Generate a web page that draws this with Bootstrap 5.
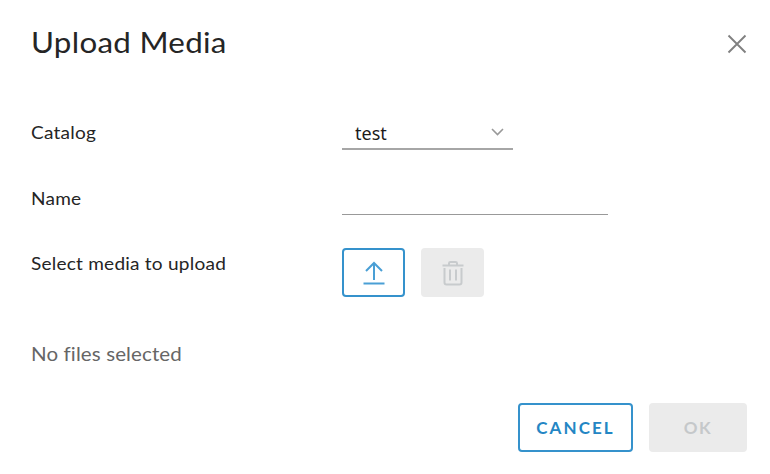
<!DOCTYPE html>
<html lang="en">
<head>
<meta charset="utf-8">
<meta name="viewport" content="width=device-width, initial-scale=1">
<title>Upload Media</title>
<link href="https://cdn.jsdelivr.net/npm/bootstrap@5.3.0/dist/css/bootstrap.min.css" rel="stylesheet">
<style>
body{font-family:Lato,"Liberation Sans",sans-serif;color:#252525;background:#fff;overflow:hidden}
.dialog{width:770px;height:474px;padding:22px 23px 0 31px}
.dialog-title{font-size:29px;line-height:40px;letter-spacing:.27px;font-weight:400;transform:scaleX(1.08);transform-origin:left}
.close-x{width:20px;height:20px;margin-top:3px}
.form-line{height:65.5px}
.label-col{width:311px;font-size:17px;line-height:24px;padding-top:10px}
.wide-text{display:inline-block;transform:scaleX(1.12);transform-origin:left;letter-spacing:.2px}
.catalog-select{width:171px;height:35px;padding:2px 8px 0 13px;border:0;border-bottom:2px solid #a6a6a6;border-radius:0;background:none;font-family:"Noto Sans",sans-serif;font-size:18px;line-height:24px;color:#1b1b1b}
.name-input{width:266px;height:34.5px;border:0;border-bottom:1px solid #999;border-radius:0;padding:0;background:none}
.line-btn{height:49px;border-radius:4px;border-width:2px;--bs-btn-color:#2486c4;--bs-btn-border-color:#3592cc;--bs-btn-disabled-color:#c5c8ca;--bs-btn-disabled-bg:#ebebeb;--bs-btn-disabled-border-color:#ebebeb;--bs-btn-disabled-opacity:1;font-size:17px;font-weight:700}
.icon-btn{width:63px}
.media-actions{margin-top:6px}
.fields{margin-top:49px}
.file-status{font-size:19px;line-height:28px;margin-top:43px;color:#666}
.file-status .wide-text{transform:scaleX(1.08);letter-spacing:.1px}
.actions{margin-top:35px;gap:16px}
.cancel-btn{width:115px;letter-spacing:2.1px}
.ok-btn{width:98px;letter-spacing:1.5px}
</style>
<script src="https://cdn.jsdelivr.net/npm/bootstrap@5.3.0/dist/js/bootstrap.bundle.min.js"></script>
</head>
<body>
<main class="dialog">
  <header class="d-flex justify-content-between align-items-center">
    <h1 class="dialog-title mb-0">Upload Media</h1>
    <button class="btn p-0 border-0 d-flex" aria-label="Close"><svg class="close-x" viewBox="0 0 20 20" fill="none" stroke="#808080" stroke-width="1.9"><path d="M1.5 1.5l17 17M18.5 1.5l-17 17"/></svg></button>
  </header>
  <form class="fields">
    <div class="form-line d-flex">
      <label class="label-col"><span class="wide-text">Catalog</span></label>
      <button type="button" class="catalog-select btn d-flex align-items-center justify-content-between mt-1"><span>test</span><svg width="15" height="10" viewBox="0 0 15 10" fill="none" stroke="#999" stroke-width="1.6"><path d="M2 1l5.500 5.500L13 1"/></svg></button>
    </div>
    <div class="form-line d-flex">
      <label class="label-col" for="name"><span class="wide-text">Name</span></label>
      <input id="name" class="name-input form-control mt-1" type="text">
    </div>
    <div class="d-flex">
      <label class="label-col"><span class="wide-text">Select media to upload</span></label>
      <div class="media-actions d-flex gap-3">
        <button type="button" class="btn line-btn icon-btn p-0 d-flex align-items-center justify-content-center" aria-label="Upload"><svg width="24" height="26" viewBox="0 0 24 26" fill="none" stroke="#4a9fd5" stroke-width="2"><path d="M12 20V3.500M4 11l8-8 8 8M1.500 23.500h21"/></svg></button>
        <button type="button" disabled class="btn line-btn icon-btn p-0 d-flex align-items-center justify-content-center" aria-label="Delete"><svg width="22" height="26" viewBox="0 0 22 26" fill="none" stroke="#c8cbcd" stroke-width="2"><path d="M.5 5.500h21M7 5V3.200Q7 2 8.500 2h5Q15 2 15 3.200V5M2.500 8v14.500Q2.500 24.500 4.500 24.500h13q2 0 2-2V8M8 9.500v11M14 9.500v11"/></svg></button>
      </div>
    </div>
  </form>
  <div class="file-status"><span class="wide-text">No files selected</span></div>
  <footer class="actions d-flex justify-content-end">
    <button class="btn line-btn cancel-btn p-0">CANCEL</button>
    <button class="btn line-btn ok-btn p-0" disabled>OK</button>
  </footer>
</main>
</body>
</html>
